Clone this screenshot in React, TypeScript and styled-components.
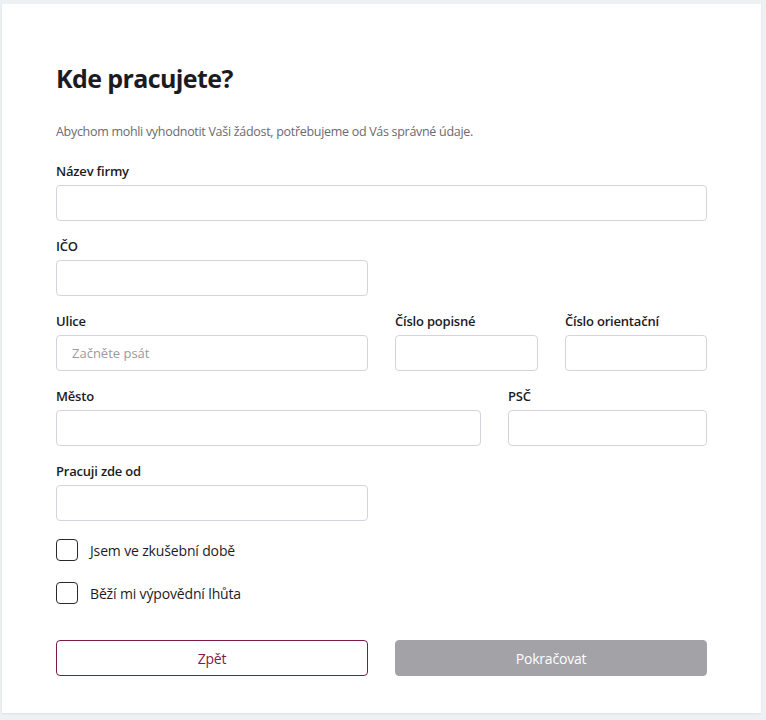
import React from "react";
import styled, { createGlobalStyle } from "styled-components";

const Global = createGlobalStyle`
  html, body { margin: 0; padding: 0; background: #edf1f4; }
  body { font-family: "Open Sans", "Noto Sans", sans-serif; color: #1c1b1f; }
  * { box-sizing: border-box; }
`;

const Page = styled.div`
  padding: 4px 5px 7px 2px;
  min-height: 720px;
`;

const Card = styled.div`
  background: #ffffff;
  padding: 57px 54px 37px 54px;
  box-shadow: 0 1px 2px rgba(30, 40, 60, 0.08);
`;

const Title = styled.h1`
  margin: 0;
  font-size: 25px;
  line-height: 34px;
  font-weight: 700;
  letter-spacing: -0.6px;
  color: #1c1b1f;
`;

const Subtitle = styled.p`
  margin: 27px 0 20px;
  font-size: 12.5px;
  line-height: 20px;
  letter-spacing: -0.3px;
  color: #6b6a70;
`;

const Grid = styled.div<{ $cols: string }>`
  display: grid;
  grid-template-columns: ${(p) => p.$cols};
  column-gap: 27px;
  margin-bottom: 16px;
`;

const Field = styled.div`
  display: flex;
  flex-direction: column;
`;

const Label = styled.label`
  font-size: 13px;
  line-height: 18px;
  font-weight: 600;
  letter-spacing: -0.2px;
  color: #1c1b1f;
  margin-bottom: 5px;
`;

const Input = styled.input`
  height: 36px;
  width: 100%;
  border: 1px solid #d4d3e0;
  border-radius: 4px;
  padding: 0 15px;
  font-family: inherit;
  font-size: 13px;
  color: #1c1b1f;
  background: #fff;
  outline: none;
  &::placeholder { color: #9a99a0; }
`;

const Checks = styled.div`
  display: flex;
  flex-direction: column;
  gap: 21px;
  margin-top: 18px;
`;

const CheckRow = styled.label`
  display: flex;
  align-items: center;
  gap: 12px;
  height: 22px;
  font-size: 14px;
  letter-spacing: -0.15px;
  color: #1c1b1f;
  cursor: pointer;
`;

const Box = styled.span`
  width: 22px;
  height: 22px;
  border: 1.5px solid #2a2a2e;
  border-radius: 4px;
  flex: none;
`;

const Buttons = styled.div`
  display: grid;
  grid-template-columns: 1fr 1fr;
  column-gap: 27px;
  margin-top: 36px;
`;

const Button = styled.button<{ $primary?: boolean }>`
  height: 36px;
  border-radius: 4px;
  font-family: inherit;
  font-size: 14px;
  letter-spacing: -0.2px;
  cursor: pointer;
  border: 1px solid ${(p) => (p.$primary ? "#a3a2a7" : "#7d1a4b")};
  background: ${(p) => (p.$primary ? "#a3a2a7" : "#ffffff")};
  color: ${(p) => (p.$primary ? "#ffffff" : "#7d1a4b")};
`;

const TextField = ({ label, placeholder }: { label: string; placeholder?: string }) => (
  <Field>
    <Label>{label}</Label>
    <Input placeholder={placeholder} />
  </Field>
);

export default function App() {
  return (
    <>
      <Global />
      <Page>
        <Card>
          <Title>Kde pracujete?</Title>
          <Subtitle>Abychom mohli vyhodnotit Vaši žádost, potřebujeme od Vás správné údaje.</Subtitle>
          <Grid $cols="1fr">
            <TextField label="Název firmy" />
          </Grid>
          <Grid $cols="312px 1fr">
            <TextField label="IČO" />
          </Grid>
          <Grid $cols="312px 143px 142px">
            <TextField label="Ulice" placeholder="Začněte psát" />
            <TextField label="Číslo popisné" />
            <TextField label="Číslo orientační" />
          </Grid>
          <Grid $cols="425px 1fr">
            <TextField label="Město" />
            <TextField label="PSČ" />
          </Grid>
          <Grid $cols="312px 1fr">
            <TextField label="Pracuji zde od" />
          </Grid>
          <Checks>
            <CheckRow>
              <Box />
              Jsem ve zkušební době
            </CheckRow>
            <CheckRow>
              <Box />
              Běží mi výpovědní lhůta
            </CheckRow>
          </Checks>
          <Buttons>
            <Button>Zpět</Button>
            <Button $primary>Pokračovat</Button>
          </Buttons>
        </Card>
      </Page>
    </>
  );
}
